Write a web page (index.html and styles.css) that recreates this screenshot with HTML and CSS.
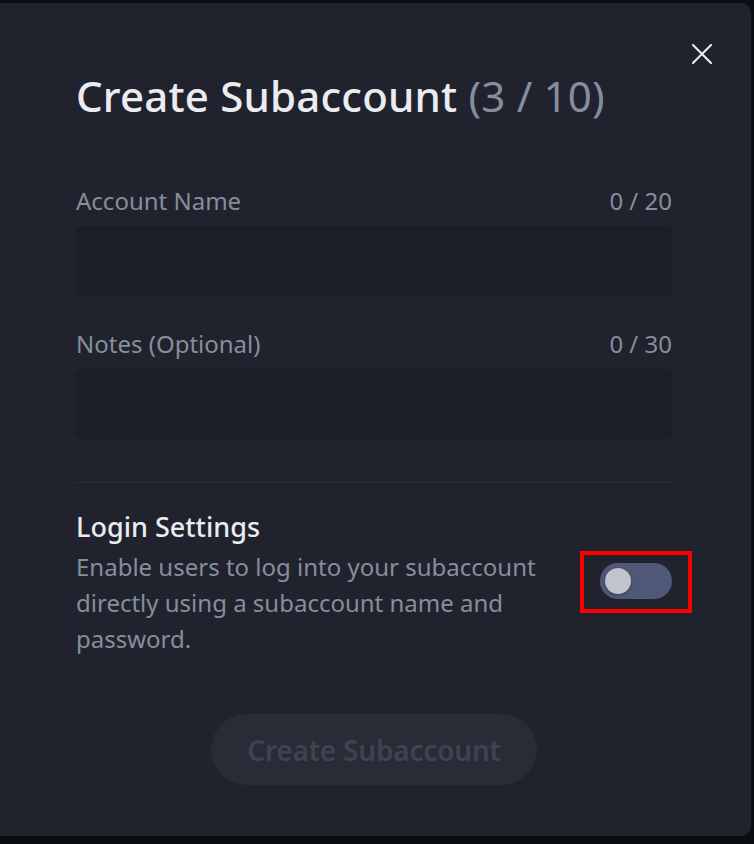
FILE: index.html
```html
<!DOCTYPE html>
<html lang="en">
<head>
<meta charset="utf-8">
<title>Create Subaccount</title>
<link rel="stylesheet" href="styles.css">
</head>
<body>
<div class="modal">
  <button class="close" aria-label="Close">
    <svg width="20" height="20" viewBox="0 0 20 20"><path d="M1 1 L19 19 M19 1 L1 19" stroke="#eaecef" stroke-width="2" stroke-linecap="square" fill="none"/></svg>
  </button>
  <h1 class="title">Create Subaccount <span class="count">(3 / 10)</span></h1>

  <div class="field field-first">
    <div class="label-row"><span>Account Name</span><span>0 / 20</span></div>
    <div class="input"></div>
  </div>

  <div class="field">
    <div class="label-row"><span>Notes (Optional)</span><span>0 / 30</span></div>
    <div class="input"></div>
  </div>

  <div class="divider"></div>

  <div class="login">
    <div class="login-text">
      <div class="login-title">Login Settings</div>
      <div class="login-desc">Enable users to log into your subaccount directly using a subaccount name and password.</div>
    </div>
    <div class="toggle-wrap">
      <div class="toggle"><div class="knob"></div></div>
      <div class="highlight"></div>
    </div>
  </div>

  <div class="actions">
    <button class="submit">Create Subaccount</button>
  </div>
</div>
</body>
</html>
```
FILE: styles.css
```css
* { box-sizing: border-box; }
html, body { margin: 0; padding: 0; }
body {
  background: #0b0e11;
  width: 754px;
  height: 844px;
  overflow: hidden;
  font-family: "Noto Sans", Roboto, sans-serif;
}
.modal {
  position: relative;
  margin-top: 3px;
  width: 751px;
  height: 833px;
  background: #20232e;
  border-radius: 0 10px 10px 0;
  padding: 69px 79px 0 76px;
}
.close {
  position: absolute;
  top: 31px;
  right: 29px;
  width: 40px;
  height: 40px;
  border: 0;
  background: transparent;
  padding: 0;
  display: flex;
  align-items: center;
  justify-content: center;
}
.title {
  margin: 0;
  font-size: 42px;
  line-height: 48px;
  font-weight: 500;
  color: #eaecef;
  letter-spacing: 0.2px;
}
.count { color: #848e9c; font-weight: 400; }
.field-first { margin-top: 66px; }
.field + .field { margin-top: 33px; }
.label-row {
  display: flex;
  justify-content: space-between;
  font-size: 24px;
  line-height: 30px;
  color: #868e9a;
}
.input {
  margin-top: 10px;
  height: 70px;
  background: #1b1e26;
  border-radius: 6px;
}
.divider {
  margin-top: 43px;
  height: 1px;
  background: #2b2f38;
}
.login {
  margin-top: 27px;
  display: flex;
  align-items: center;
  justify-content: space-between;
}
.login-text { width: 490px; }
.login-title {
  font-size: 27px;
  line-height: 34px;
  color: #eaecef;
  font-weight: 500;
}
.login-desc {
  margin-top: 5px;
  font-size: 24px;
  line-height: 36px;
  color: #868e9a;
}
.toggle-wrap {
  position: relative;
  margin-top: -6px;
}
.toggle {
  width: 72px;
  height: 36px;
  border-radius: 18px;
  background: #4f5877;
  padding: 5px 0 0 5px;
}
.knob {
  width: 26px;
  height: 26px;
  border-radius: 50%;
  background: #c1c4ca;
  box-shadow: 0 1px 3px rgba(0,0,0,0.35);
}
.highlight {
  position: absolute;
  left: -20px;
  top: -12px;
  width: 112px;
  height: 62px;
  border: 4px solid #ff0000;
}
.actions {
  margin-top: 57px;
  display: flex;
  justify-content: center;
}
.submit {
  width: 326px;
  height: 71px;
  border: 0;
  border-radius: 36px;
  background: #282c37;
  color: #3e4350;
  font-family: inherit;
  font-size: 28px;
  font-weight: 600;
  letter-spacing: -0.2px;
}
```
